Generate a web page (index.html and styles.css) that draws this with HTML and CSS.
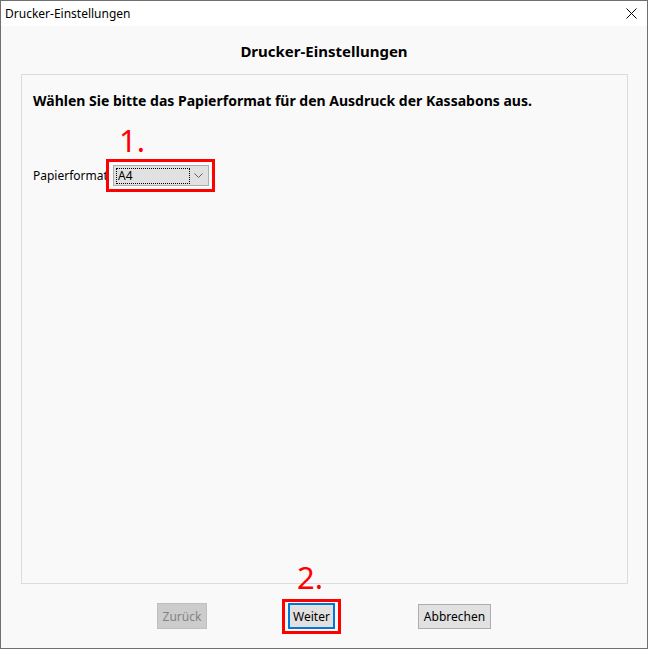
FILE: index.html
```html
<!DOCTYPE html>
<html lang="de">
<head>
    <meta charset="UTF-8">
    <meta name="viewport" content="width=device-width, initial-scale=1.0">
    <title>Drucker-Einstellungen</title>
    <link rel="stylesheet" href="styles.css">
</head>
<body>
    <div class="window">
        <div class="titlebar">
            <span class="titlebar-text">Drucker-Einstellungen</span>
            <span class="close-btn">
                <svg width="11" height="11" viewBox="0 0 11 11">
                    <path d="M0.5 0.5 L10.5 10.5 M10.5 0.5 L0.5 10.5" stroke="#000" stroke-width="1" fill="none"/>
                </svg>
            </span>
        </div>
        <div class="content">
            <h1 class="heading">Drucker-Einstellungen</h1>
            <div class="panel">
                <p class="intro">Wählen Sie bitte das Papierformat für den Ausdruck der Kassabons aus.</p>
                <div class="field-row">
                    <label class="field-label">Papierformat</label>
                    <div class="combo">
                        <span class="combo-value"><span class="focus-rect">A4</span></span>
                        <svg class="combo-arrow" width="9" height="5" viewBox="0 0 9 5">
                            <path d="M0.5 0.5 L4.5 4.5 L8.5 0.5" stroke="#606060" stroke-width="1" fill="none"/>
                        </svg>
                    </div>
                </div>
            </div>
            <div class="buttons">
                <button class="btn btn-back" disabled>Zurück</button>
                <button class="btn btn-next">Weiter</button>
                <button class="btn btn-cancel">Abbrechen</button>
            </div>
        </div>

        <!-- Markierungen -->
        <div class="mark mark-box-1"></div>
        <div class="mark-num mark-num-1">1.</div>
        <div class="mark mark-box-2"></div>
        <div class="mark-num mark-num-2">2.</div>
    </div>
</body>
</html>
```

FILE: styles.css
```css
body {
    margin: 0;
    padding: 0;
    font-family: "Noto Sans", "Open Sans", sans-serif;
    font-size: 12px;
    color: #000;
    background-color: #fff;
}
.window {
    position: relative;
    width: 648px;
    height: 649px;
    box-sizing: border-box;
    border: 1px solid #6f6f6f;
    display: flex;
    flex-direction: column;
    background-color: #f9f9f9;
}
.titlebar {
    height: 25px;
    background-color: #fff;
    display: flex;
    align-items: center;
    justify-content: space-between;
    padding-left: 4px;
}
.titlebar-text {
    font-size: 12px;
}
.close-btn {
    width: 30px;
    display: flex;
    justify-content: center;
    margin-right: 1px;
}
.close-btn svg {
    display: block;
}
.content {
    flex: 1;
    display: flex;
    flex-direction: column;
}
.heading {
    margin: 14px 0 12px;
    font-size: 15px;
    font-weight: bold;
    text-align: center;
    line-height: 22px;
}
.panel {
    height: 510px;
    box-sizing: border-box;
    margin: 0 19px 0 20px;
    border: 1px solid #dcdcdc;
    padding: 16px 11px;
}
.intro {
    margin: 0;
    font-size: 14px;
    font-weight: bold;
    line-height: 20px;
}
.field-row {
    display: flex;
    align-items: center;
    margin-top: 54px;
}
.field-label {
    width: 80px;
    font-size: 12px;
}
.combo {
    width: 96px;
    height: 21px;
    box-sizing: border-box;
    border: 1px solid #adadad;
    background-color: #e1e1e1;
    display: flex;
    align-items: center;
    justify-content: space-between;
    padding: 0 5px 0 2px;
}
.combo-value {
    display: flex;
    width: 74px;
}
.focus-rect {
    flex: 1;
    border: 1px dotted #000;
    font-size: 12px;
    line-height: 14px;
    padding-left: 1px;
}
.combo-arrow {
    display: block;
}
.buttons {
    display: flex;
    align-items: center;
    gap: 81px;
    padding: 19px 0 0 156px;
}
.btn {
    height: 26px;
    box-sizing: border-box;
    font-family: inherit;
    font-size: 12px;
    padding: 0;
    border: 1px solid #adadad;
    background-color: #e1e1e1;
    color: #000;
}
.btn-back {
    width: 50px;
    background-color: #cccccc;
    border-color: #bfbfbf;
    color: #838383;
}
.btn-next {
    width: 47px;
    border: 2px solid #0078d7;
}
.btn-cancel {
    width: 73px;
    height: 25px;
    margin-left: 2px;
}
.mark {
    position: absolute;
    box-sizing: border-box;
    border: 3px solid #ff0000;
}
.mark-box-1 {
    left: 105px;
    top: 158px;
    width: 109px;
    height: 33px;
}
.mark-box-2 {
    left: 281px;
    top: 598px;
    width: 59px;
    height: 35px;
}
.mark-num {
    position: absolute;
    color: #ff0000;
    font-size: 31px;
    line-height: 31px;
}
.mark-num-1 {
    left: 118px;
    top: 124px;
}
.mark-num-2 {
    left: 296px;
    top: 561px;
}
```
